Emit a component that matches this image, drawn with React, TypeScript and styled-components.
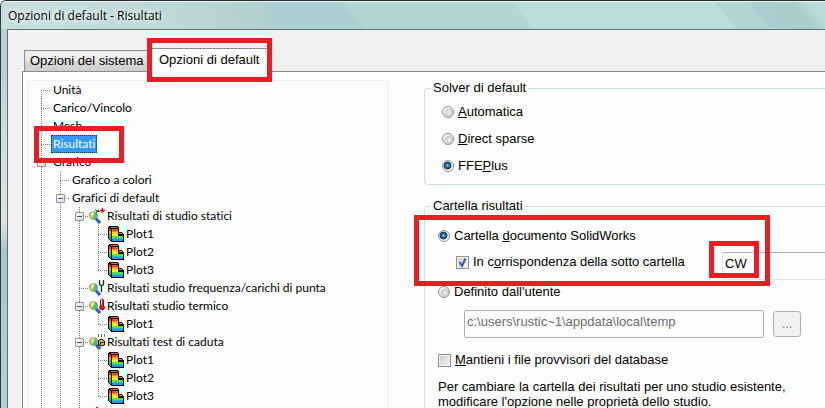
import React from "react";
import styled, { createGlobalStyle, css } from "styled-components";

const RED = "#ed1c24";
const DOTS = "#7f7f7f";
const SURFACE = "#fcfffc";
const FACE = "#f3f0f4";

const GlobalStyle = createGlobalStyle`
  * { box-sizing: border-box; }
  body {
    margin: 0;
    overflow: hidden;
    color: #000;
    font: 13px/18px "Liberation Sans", Arial, sans-serif;
  }
  input, button { font: inherit; }
`;

const DialogWindow = styled.main`
  min-height: 100vh;
  display: flex;
  flex-direction: column;
  padding-left: 6px;
  border-top: 1px solid #26292f;
  border-left: 1px solid #30383c;
  border-top-left-radius: 6px;
  background: linear-gradient(#b9d3d2 0, #b9d3d2 70px, #c9dfde 130px, #dfe3e2 220px, #a5c8c6 250px, #b4d3d0 100%);
`;

const TitleBar = styled.header`
  height: 28px;
  margin-left: -6px;
  padding-left: 7px;
  display: flex;
  align-items: center;
  border-top: 1px solid #eef8f7;
  border-top-left-radius: 5px;
  background: linear-gradient(52deg, #c8dfde 0, #c0dad9 18%, #b1d0cf 33%, #aad0d1 33%, #aad0d1 43%, #b3d5d3 43%, #b3d5d3 63%, #bbdedc 63%, #bbdedc 87%, #b2d4d2 87%, #b2d4d2 91%, #aacecf 91%, #a9cbc9 96%, #b9dcda 98%);
`;

const Title = styled.h1`
  margin: 0;
  font: 12px/18px "Open Sans", "Noto Sans", sans-serif;
  text-shadow: 0 0 5px #fff, 0 0 8px #fff;
`;

const Client = styled.div`
  flex: 1;
  display: flex;
  flex-direction: column;
  padding: 18px 0 0 14px;
  border-top: 1px solid #5f7470;
  border-left: 1px solid #5f7470;
  background: ${FACE};
`;

const TabList = styled.div`
  display: flex;
  align-items: flex-end;
  margin-bottom: -1px;
  padding-left: 2px;
`;

const Tab = styled.button<{ $active?: boolean }>`
  position: relative;
  height: 22px;
  width: 125px;
  padding: 0 0 0 5px;
  border: 1px solid #8b8c90;
  border-right: 0;
  background: linear-gradient(#f1f0f1 0, #eaeaea 50%, #dadada 50%, #cfcfcf 100%);
  text-align: left;
  white-space: nowrap;
  color: #000;
  ${(p) =>
    p.$active &&
    css`
      z-index: 1;
      height: 24px;
      width: 120px;
      padding: 0 0 2px 9px;
      border-bottom: 0;
      background: ${SURFACE};
    `}
`;

const Marker = styled.span`
  position: absolute;
  z-index: 2;
  border: 5px solid ${RED};
  pointer-events: none;
`;
const TabMarker = styled(Marker)`
  inset: -11px -3px -10px -3px;
`;
const ItemMarker = styled(Marker)`
  inset: -9px -27px -10px -17px;
`;
const FolderMarker = styled(Marker)`
  inset: -12px auto -6px -24px;
  width: 356px;
`;
const FieldMarker = styled(Marker)`
  top: -11px;
  left: -13px;
  width: 50px;
  height: 37px;
`;

const Page = styled.section`
  flex: 1;
  display: grid;
  grid-template-columns: 360px 1fr;
  gap: 36px;
  padding: 8px 0 0 5px;
  border-top: 1px solid #8b8c90;
  border-left: 1px solid #8b8c90;
  background: ${SURFACE};
`;

const Tree = styled.ul`
  margin: 0;
  padding: 0 0 0 3px;
  list-style: none;
  height: calc(100vh - 80px);
  overflow: hidden;
  border: 1px solid ${FACE};
  border-width: 1px 1px 0 1px;
  font: 12px/18px Lato, "Open Sans", sans-serif;
  font-variant-ligatures: none;
`;

const TreeRow = styled.li`
  display: flex;
  align-items: center;
  height: 18px;
`;

type Guide = "line" | "first" | "tee" | "end" | "minus";

const dotsDown = `repeating-linear-gradient(${DOTS} 0 1px, transparent 1px 2px)`;
const dotsAcross = `repeating-linear-gradient(90deg, ${DOTS} 0 1px, transparent 1px 2px)`;

const Cell = styled.span<{ $guide: Guide }>`
  flex: none;
  width: 19px;
  height: 18px;
  display: flex;
  align-items: center;
  padding-left: 5px;
  ${({ $guide: g }) => {
    const down =
      g === "first" ? "9px 9px / 1px 9px" : g === "end" ? "9px 0 / 1px 10px" : "9px 0 / 1px 18px";
    if (g === "line") return `background: ${dotsDown} ${down} no-repeat;`;
    return `background: ${dotsDown} ${down} no-repeat, ${dotsAcross} 9px 9px / 9px 1px no-repeat;`;
  }}
`;

const Toggle = styled.button`
  width: 9px;
  height: 9px;
  padding: 0;
  border: 1px solid #919191;
  border-radius: 1px;
  background: linear-gradient(#3b5390, #3b5390) center / 5px 1px no-repeat,
    linear-gradient(135deg, #fff, #dcdcdc);
`;

const Label = styled.span<{ $selected?: boolean }>`
  position: relative;
  padding: 0 2px;
  white-space: nowrap;
  ${(p) =>
    p.$selected &&
    css`
      color: #fff;
      background: #3399ff;
      outline: 1px dotted #3a2408;
      outline-offset: -1px;
    `}
`;

const Icon = styled.svg`
  flex: none;
  width: 16px;
  height: 16px;
`;

const PlotIcon = () => (
  <Icon viewBox="0 0 16 16" shapeRendering="crispEdges" aria-hidden="true">
    <path d="M1 0h8l2 1v5h2l3 3v7H4l-4-3V1z" fill="#000" />
    <path d="M1 2l2 1v2H1z" fill="#e83818" />
    <path d="M1 5h2v3H1z" fill="#f8a000" />
    <path d="M1 8h2v3H1z" fill="#60c030" />
    <path d="M1 11h2v3l-2-1z" fill="#18a8b0" />
    <path d="M2 1h7l1 1H4z" fill="#f86030" />
    <path d="M4 3h6v2H4z" fill="#ff4820" />
    <path d="M4 5h6v1H4z" fill="#ff9000" />
    <path d="M4 6h6v2H4z" fill="#ffd000" />
    <path d="M4 8h6v2H4z" fill="#f8f800" />
    <path d="M4 10h11v2H4z" fill="#58e038" />
    <path d="M4 12h11v1H4z" fill="#20c8b0" />
    <path d="M4 13h11v2H4z" fill="#2890ff" />
    <path d="M10 9h5v1h-5z" fill="#000" />
    <path d="M11 7h2l1 1h-3z" fill="#f0a020" />
  </Icon>
);

type Study = "static" | "frequency" | "thermal" | "drop" | "next";

const StudyIcon = ({ kind }: { kind: Study }) => (
  <Icon viewBox="0 0 16 16" aria-hidden="true">
    <defs>
      <linearGradient id="lens" x1="0" y1="0.3" x2="1" y2="0.7">
        <stop offset="0" stopColor="#ff5838" />
        <stop offset="0.3" stopColor="#ffe838" />
        <stop offset="0.6" stopColor="#48d058" />
        <stop offset="1" stopColor="#38a0f8" />
      </linearGradient>
    </defs>
    {kind !== "next" && (
      <>
        <path d="m7 10.500 4 4.500" stroke="#1c48b8" strokeWidth="3" />
        <path d="m7.500 10.500 3 3.500" stroke="#5090f8" strokeWidth="1" />
        <circle cx="4.500" cy="7.500" r="4" fill="url(#lens)" stroke="#888" strokeWidth="0.800" />
        <circle cx="3.500" cy="6" r="1.500" fill="#fff" opacity="0.700" />
      </>
    )}
    {kind === "static" && (
      <>
        <path d="M6 1.500 8 3l3 1M7 4.500 10 2" stroke="#222" fill="none" />
        <path d="M13.500 0v4M11 2.500h5M12.500 4h2" stroke="#d01010" strokeWidth="1.300" />
      </>
    )}
    {kind === "frequency" && (
      <path d="M10.500 0v4.500l2 1.500 2-1.500V0M12.500 6v6" stroke="#222" strokeWidth="1.300" fill="none" />
    )}
    {kind === "thermal" && (
      <>
        <path d="M11.500 2q1.500-2.500 3 0v5.500q2 2 0 4h-3q-2-2 0-4z" fill="#e81818" stroke="#901010" />
        <path d="M12.500 1.500v5" stroke="#fff" />
      </>
    )}
    {kind === "drop" && (
      <>
        <path d="M9.500 0v3M12.500 0v3M15.500 0v3" stroke="#777" />
        <path d="m9.500 6.500 3-1.500 3 2v4l-3 1-3-1z" fill="#f0b800" stroke="#000" />
        <path d="M11.500 10.500v-2h3" fill="none" stroke="#000" />
      </>
    )}
    {kind === "next" && <path d="M7 1.500h2V4M9 2.500h2V4" stroke="#c01818" fill="none" />}
  </Icon>
);

interface Item {
  label: string;
  guides: Guide[];
  icon?: "plot" | Study;
  selected?: boolean;
}

const items: Item[] = [
  { label: "Unità", guides: ["first"] },
  { label: "Carico/Vincolo", guides: ["tee"] },
  { label: "Mesh", guides: ["tee"] },
  { label: "Risultati", guides: ["tee"], selected: true },
  { label: "Grafico", guides: ["minus"] },
  { label: "Grafico a colori", guides: ["line", "tee"] },
  { label: "Grafici di default", guides: ["line", "minus"] },
  { label: "Risultati di studio statici", guides: ["line", "line", "minus"], icon: "static" },
  { label: "Plot1", guides: ["line", "line", "line", "tee"], icon: "plot" },
  { label: "Plot2", guides: ["line", "line", "line", "tee"], icon: "plot" },
  { label: "Plot3", guides: ["line", "line", "line", "end"], icon: "plot" },
  { label: "Risultati studio frequenza/carichi di punta", guides: ["line", "line", "tee"], icon: "frequency" },
  { label: "Risultati studio termico", guides: ["line", "line", "minus"], icon: "thermal" },
  { label: "Plot1", guides: ["line", "line", "line", "end"], icon: "plot" },
  { label: "Risultati test di caduta", guides: ["line", "line", "minus"], icon: "drop" },
  { label: "Plot1", guides: ["line", "line", "line", "tee"], icon: "plot" },
  { label: "Plot2", guides: ["line", "line", "line", "tee"], icon: "plot" },
  { label: "Plot3", guides: ["line", "line", "line", "end"], icon: "plot" },
  { label: "", guides: ["line", "line", "line"], icon: "next" },
];

const Form = styled.form`
  display: flex;
  flex-direction: column;
  gap: 13px;
  min-width: 0;
`;

const Group = styled.fieldset`
  min-width: 0;
  margin: 0;
  padding: 0;
  border: 1px solid #d0dde8;
  border-right: 0;
  border-radius: 4px 0 0 4px;
`;

const Legend = styled.legend`
  height: 16px;
  margin-left: 6px;
  padding: 0 2px;
  line-height: 16px;
`;

const SolverOptions = styled.div`
  display: flex;
  flex-direction: column;
  gap: 9px;
  padding: 7px 0 9px 17px;
`;

const FolderOptions = styled.div`
  display: flex;
  flex-direction: column;
  padding: 13px 0 0 13px;
`;

const DocumentFolder = styled.div`
  position: relative;
  display: flex;
  flex-direction: column;
  gap: 7px;
`;

const SubfolderRow = styled.div`
  display: flex;
  align-items: flex-start;
  padding-left: 18px;
`;

const Option = styled.label`
  display: flex;
  align-items: center;
  gap: 4px;
  height: 18px;
  white-space: nowrap;
`;

const SubfolderOption = styled(Option)`
  width: 266px;
  height: 20px;
`;

const Radio = styled.input.attrs({ type: "radio" })`
  appearance: none;
  flex: none;
  width: 12px;
  height: 12px;
  margin: 0;
  border: 1px solid #8e8f8f;
  border-radius: 50%;
  background: radial-gradient(circle at 60% 60%, #eee 0, #ccc 45%, #f8f8f8 60%);
  &:checked {
    background: radial-gradient(circle at 45% 45%, #7fd0f4 0, #2a80b8 20%, #0c2c50 45%, #f4f4f4 55%);
  }
`;

const Check = styled.input.attrs({ type: "checkbox" })`
  appearance: none;
  flex: none;
  width: 13px;
  height: 13px;
  margin: 0;
  border: 1px solid #8e8f8f;
  outline: 1px solid #f4f4f4;
  outline-offset: -2px;
  background: linear-gradient(135deg, #c8ccd0, #f6f6f6);
`;

const CheckBox = styled.span`
  position: relative;
  display: flex;
`;

const Tick = styled.svg`
  position: absolute;
  inset: 0;
  width: 13px;
  height: 13px;
  pointer-events: none;
`;

const FieldWrap = styled.span`
  position: relative;
  flex: 1;
  display: flex;
`;

const TextField = styled.input.attrs({ type: "text" })`
  width: 100%;
  height: 28px;
  padding: 0 2px 5px;
  border: 1px solid #e3e5e9;
  border-top-color: #abadb3;
  border-right: 0;
  border-radius: 0;
  background: ${SURFACE};
  color: #000;
`;

const UserOption = styled(Option)`
  margin-top: 3px;
`;

const PathRow = styled.div`
  display: flex;
  align-items: center;
  gap: 9px;
  margin-top: 9px;
  padding-left: 26px;
`;

const PathField = styled.input.attrs({ type: "text" })`
  width: 300px;
  height: 28px;
  padding: 0 2px 5px;
  border: 1px solid #afafaf;
  border-radius: 2px;
  background: ${SURFACE};
  color: #6d6d6d;
`;

const BrowseButton = styled.button`
  width: 28px;
  height: 26px;
  padding: 0;
  border: 1px solid #adb2b5;
  border-radius: 3px;
  background: ${FACE};
  color: #838383;
`;

const KeepOption = styled(Option)`
  margin-top: 13px;
`;

const Note = styled.p`
  margin: 10px 0 0;
  line-height: 15px;
  white-space: nowrap;
`;

export default function App() {
  return (
    <>
      <GlobalStyle />
      <DialogWindow>
        <TitleBar>
          <Title>Opzioni di default - Risultati</Title>
        </TitleBar>
        <Client>
          <TabList role="tablist">
            <Tab role="tab" aria-selected={false}>Opzioni del sistema</Tab>
            <Tab role="tab" aria-selected $active>
              Opzioni di default
              <TabMarker />
            </Tab>
          </TabList>
          <Page role="tabpanel">
            <Tree role="tree">
              {items.map((item, i) => (
                <TreeRow key={i} role="treeitem" aria-selected={!!item.selected}>
                  {item.guides.map((g, j) => (
                    <Cell key={j} $guide={g}>
                      {g === "minus" && <Toggle aria-label={`Comprimi ${item.label}`} />}
                    </Cell>
                  ))}
                  {item.icon === "plot" && <PlotIcon />}
                  {item.icon && item.icon !== "plot" && <StudyIcon kind={item.icon} />}
                  <Label $selected={item.selected}>
                    {item.label}
                    {item.selected && <ItemMarker />}
                  </Label>
                </TreeRow>
              ))}
            </Tree>
            <Form>
              <Group>
                <Legend>Solver di default</Legend>
                <SolverOptions>
                  <Option><Radio name="solver" /><span><u>A</u>utomatica</span></Option>
                  <Option><Radio name="solver" /><span><u>D</u>irect sparse</span></Option>
                  <Option><Radio name="solver" defaultChecked /><span>FFE<u>P</u>lus</span></Option>
                </SolverOptions>
              </Group>
              <Group>
                <Legend>Cartella risultati</Legend>
                <FolderOptions>
                  <DocumentFolder>
                    <Option>
                      <Radio name="folder" defaultChecked />
                      <span>Cartella <u>d</u>ocumento SolidWorks</span>
                    </Option>
                    <SubfolderRow>
                      <SubfolderOption>
                        <CheckBox>
                          <Check defaultChecked />
                          <Tick viewBox="0 0 13 13" aria-hidden="true">
                            <path d="m3.500 6 2.500 4L9.500 2.500" fill="none" stroke="#3c55a0" strokeWidth="2" />
                          </Tick>
                        </CheckBox>
                        <span>In c<u>o</u>rrispondenza della sotto cartella</span>
                      </SubfolderOption>
                      <FieldWrap>
                        <TextField aria-label="Sotto cartella" defaultValue="CW" />
                        <FieldMarker />
                      </FieldWrap>
                    </SubfolderRow>
                    <FolderMarker />
                  </DocumentFolder>
                  <UserOption><Radio name="folder" /><span>Definito dall'utente</span></UserOption>
                  <PathRow>
                    <PathField aria-label="Percorso" disabled defaultValue={"c:\\users\\rustic~1\\appdata\\local\\temp"} />
                    <BrowseButton type="button" disabled aria-label="Sfoglia">...</BrowseButton>
                  </PathRow>
                  <KeepOption><Check /><span><u>M</u>antieni i file provvisori del database</span></KeepOption>
                  <Note>
                    Per cambiare la cartella dei risultati per uno studio esistente,
                    <br />
                    modificare l'opzione nelle proprietà dello studio.
                  </Note>
                </FolderOptions>
              </Group>
            </Form>
          </Page>
        </Client>
      </DialogWindow>
    </>
  );
}
